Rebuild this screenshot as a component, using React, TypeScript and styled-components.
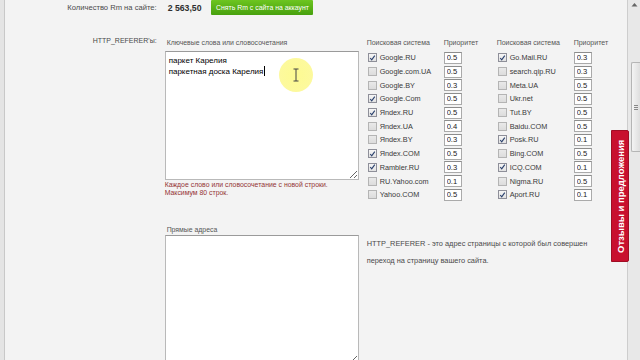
import styled, { createGlobalStyle } from "styled-components";

const GlobalStyle = createGlobalStyle`
  html, body {
    margin: 0;
    padding: 0;
    height: 100%;
  }
  body {
    background: #f3f3f3;
    overflow: hidden;
    font-family: "Liberation Sans", Arial, sans-serif;
  }
  #root {
    height: 100%;
  }
`;

type Engine = { name: string; on: boolean; prio: string };

const leftEngines: Engine[] = [
  { name: "Google.RU", on: true, prio: "0.5" },
  { name: "Google.com.UA", on: false, prio: "0.5" },
  { name: "Google.BY", on: false, prio: "0.3" },
  { name: "Google.Com", on: true, prio: "0.5" },
  { name: "Яndex.RU", on: true, prio: "0.5" },
  { name: "Яndex.UA", on: false, prio: "0.4" },
  { name: "Яndex.BY", on: false, prio: "0.3" },
  { name: "Яndex.COM", on: true, prio: "0.5" },
  { name: "Rambler.RU", on: true, prio: "0.3" },
  { name: "RU.Yahoo.com", on: false, prio: "0.1" },
  { name: "Yahoo.COM", on: false, prio: "0.5" },
];

const rightEngines: Engine[] = [
  { name: "Go.Mail.RU", on: true, prio: "0.3" },
  { name: "search.qip.RU", on: false, prio: "0.3" },
  { name: "Meta.UA", on: false, prio: "0.5" },
  { name: "Ukr.net", on: false, prio: "0.5" },
  { name: "Tut.BY", on: false, prio: "0.5" },
  { name: "Baidu.COM", on: false, prio: "0.5" },
  { name: "Posk.RU", on: true, prio: "0.1" },
  { name: "Bing.COM", on: false, prio: "0.5" },
  { name: "ICQ.COM", on: true, prio: "0.1" },
  { name: "Nigma.RU", on: false, prio: "0.5" },
  { name: "Aport.RU", on: true, prio: "0.1" },
];

const EngineTable = ({ items }: { items: Engine[] }) => (
  <Table>
    <HeadCell>Поисковая система</HeadCell>
    <HeadCell>Приоритет</HeadCell>
    {items.map((e) => (
      <EngineRow key={e.name}>
        <EngineName>
          <Check $on={e.on}>
            {e.on && (
              <svg width="8" height="8" viewBox="0 0 8 8">
                <path d="M1.4 4 L3.1 6.1 L6.6 1.2" fill="none" stroke="#2b426e" strokeWidth="1.3" />
              </svg>
            )}
          </Check>
          {e.name}
        </EngineName>
        <Prio defaultValue={e.prio} />
      </EngineRow>
    ))}
  </Table>
);

const App = () => {
  return (
    <>
      <GlobalStyle />
      <Page>
        <LeftEdge />
        <Main>
          <BalanceRow>
            <Label $size={7.6}>Количество Rm на сайте:</Label>
            <Amount>2 563,50</Amount>
            <GreenButton>Снять Rm с сайта на аккаунт</GreenButton>
          </BalanceRow>

          <RefererRow>
            <Label $size={7}>HTTP_REFERER'ы:</Label>
            <FieldsColumn>
              <Caption>Ключевые слова или словосочетания</Caption>
              <AreaWrap>
                <Area
                  $h={129}
                  defaultValue={"паркет Карелия\nпаркетная доска Карелия"}
                />
                <Caret />
              </AreaWrap>
              <Hint>
                Каждое слово или словосочетание с новой строки.
                <br />
                Максимум 80 строк.
              </Hint>
              <Caption $gap>Прямые адреса</Caption>
              <Area $h={130} />
            </FieldsColumn>
            <EnginesColumn>
              <Tables>
                <EngineTable items={leftEngines} />
                <EngineTable items={rightEngines} />
              </Tables>
              <Description>
                HTTP_REFERER - это адрес страницы с которой был совершен
                <br />
                переход на страницу вашего сайта.
              </Description>
            </EnginesColumn>
          </RefererRow>

          <Highlight>
            <svg width="8" height="14" viewBox="0 0 8 14">
              <path d="M1.5 1 H6.5 M4 1 V13 M1.5 13 H6.5" fill="none" stroke="#444" strokeWidth="1" />
            </svg>
          </Highlight>
        </Main>
        <Rail>
          <RailArrow>
            <svg width="7" height="5" viewBox="0 0 7 5">
              <path d="M0.5 4.5 L3.5 1 L6.5 4.5 Z" fill="#666" />
            </svg>
          </RailArrow>
          <Thumb>
            <Grip />
          </Thumb>
        </Rail>
        <FeedbackTab>Отзывы и предложения</FeedbackTab>
      </Page>
    </>
  );
};

const Page = styled.div`
  display: flex;
  width: 640px;
  height: 360px;
  position: relative;
  overflow: hidden;
`;

const LeftEdge = styled.div`
  width: 5px;
  background: #e4e4e4;
  border-right: 1px solid #c8c8c8;
`;

const Main = styled.div`
  flex: 1;
  position: relative;
  display: flex;
  flex-direction: column;
  background: #f3f3f3;
  border-right: 1px solid #cdcdcd;
`;

const BalanceRow = styled.div`
  display: flex;
  align-items: center;
  height: 15px;
`;

const Label = styled.div<{ $size: number }>`
  width: 152px;
  flex: none;
  text-align: right;
  font-size: ${(p) => p.$size}px;
  line-height: 10px;
  color: #4a4a4a;
`;

const Amount = styled.div`
  margin-left: 11px;
  font-weight: bold;
  font-size: 8.7px;
  color: #2e2e2e;
`;

const GreenButton = styled.button`
  margin-left: 10px;
  width: 102px;
  height: 15px;
  padding: 0;
  border: none;
  border-radius: 1px;
  background: linear-gradient(#6dc520, #47a00e);
  color: #fff;
  font-family: "Liberation Sans", Arial, sans-serif;
  font-size: 6.9px;
  line-height: 15px;
  white-space: nowrap;
`;

const RefererRow = styled.div`
  display: flex;
  margin-top: 21px;
`;

const FieldsColumn = styled.div`
  display: flex;
  flex-direction: column;
  width: 194px;
  margin-left: 8px;
`;

const Caption = styled.div<{ $gap?: boolean }>`
  padding-left: 2px;
  padding-top: ${(p) => (p.$gap ? "0" : "2px")};
  margin-top: ${(p) => (p.$gap ? "28px" : "0")};
  height: ${(p) => (p.$gap ? "10px" : "13px")};
  font-size: 6.9px;
  line-height: 10px;
  color: #555;
`;

const AreaWrap = styled.div`
  position: relative;
`;

const Area = styled.textarea<{ $h: number }>`
  display: block;
  box-sizing: border-box;
  width: 194px;
  height: ${(p) => p.$h}px;
  margin: 0;
  padding: 3px 3px;
  border: 1px solid #b9b9b9;
  border-top-color: #9a9a9a;
  background: #fff;
  font-family: "Liberation Sans", Arial, sans-serif;
  font-size: 8px;
  line-height: 11px;
  color: #000;
  outline: none;
`;

const Caret = styled.span`
  position: absolute;
  left: 99px;
  top: 15px;
  width: 1px;
  height: 10px;
  background: #000;
`;

const Hint = styled.div`
  margin-top: 1px;
  font-size: 6.9px;
  line-height: 8px;
  color: #933434;
`;

const EnginesColumn = styled.div`
  display: flex;
  flex-direction: column;
  margin-left: 8px;
`;

const Tables = styled.div`
  display: flex;
`;

const Table = styled.div`
  display: grid;
  grid-template-columns: 77px 18px;
  grid-auto-rows: 13.7px;
  grid-template-rows: 15px;
  width: 130px;
`;

const HeadCell = styled.div`
  padding-top: 2px;
  font-size: 7px;
  line-height: 10px;
  color: #555;
  white-space: nowrap;
`;

const EngineRow = styled.div`
  display: contents;
`;

const EngineName = styled.span`
  grid-column: 1;
  display: flex;
  align-items: center;
  font-size: 7.3px;
  color: #3a3a3a;
  white-space: nowrap;
`;

const Check = styled.span<{ $on: boolean }>`
  box-sizing: border-box;
  width: 9px;
  height: 9px;
  margin: 0 3px 0 1px;
  border: 1px solid ${(p) => (p.$on ? "#8e8f99" : "#b4b4b4")};
  background: ${(p) => (p.$on ? "linear-gradient(#f6f6f6, #e2e2e2)" : "linear-gradient(#e9e9e9, #dcdcdc)")};
  display: flex;
  align-items: center;
  justify-content: center;
`;

const Prio = styled.input`
  grid-column: 2;
  align-self: center;
  box-sizing: border-box;
  width: 18px;
  height: 12px;
  margin: 0;
  padding: 0 0 0 2px;
  border: 1px solid #aaa;
  border-top-color: #8c8c8c;
  background: #fff;
  font-family: "Liberation Sans", Arial, sans-serif;
  font-size: 7.6px;
  color: #222;
  outline: none;
`;

const Description = styled.div`
  margin-top: 33px;
  font-size: 7.4px;
  line-height: 17px;
  color: #4a4a4a;
  white-space: nowrap;
`;

const Highlight = styled.div`
  position: absolute;
  left: 274px;
  top: 58px;
  width: 34px;
  height: 34px;
  border-radius: 50%;
  background: radial-gradient(circle, rgba(253, 250, 140, 0.95) 0%, rgba(252, 248, 140, 0.85) 70%, rgba(252, 248, 140, 0) 100%);
  display: flex;
  align-items: center;
  justify-content: center;
`;

const Rail = styled.div`
  width: 17px;
  display: flex;
  flex-direction: column;
  align-items: flex-end;
  background: #e8e8e8;
`;

const RailArrow = styled.div`
  width: 11px;
  height: 8px;
  display: flex;
  align-items: center;
  justify-content: center;
`;

const Thumb = styled.div`
  margin-top: 54px;
  width: 9px;
  height: 90px;
  box-sizing: border-box;
  border: 1px solid #b5b5b5;
  border-right: none;
  border-radius: 2px 0 0 2px;
  background: linear-gradient(90deg, #f4f4f4, #dedede);
  display: flex;
  align-items: center;
  justify-content: center;
`;

const Grip = styled.div`
  width: 4px;
  height: 5px;
  background: repeating-linear-gradient(#888 0 1px, transparent 1px 2px);
`;

const FeedbackTab = styled.div`
  position: absolute;
  left: 611px;
  top: 130px;
  width: 18px;
  height: 132px;
  box-sizing: border-box;
  background: #c8102e;
  border: 1px solid #a00d24;
  border-radius: 2px 0 0 2px;
  writing-mode: vertical-rl;
  transform: rotate(180deg);
  display: flex;
  align-items: center;
  justify-content: center;
  color: #fff;
  font-family: "Liberation Sans", Arial, sans-serif;
  font-weight: bold;
  font-size: 9.5px;
  white-space: nowrap;
`;

export default App;
